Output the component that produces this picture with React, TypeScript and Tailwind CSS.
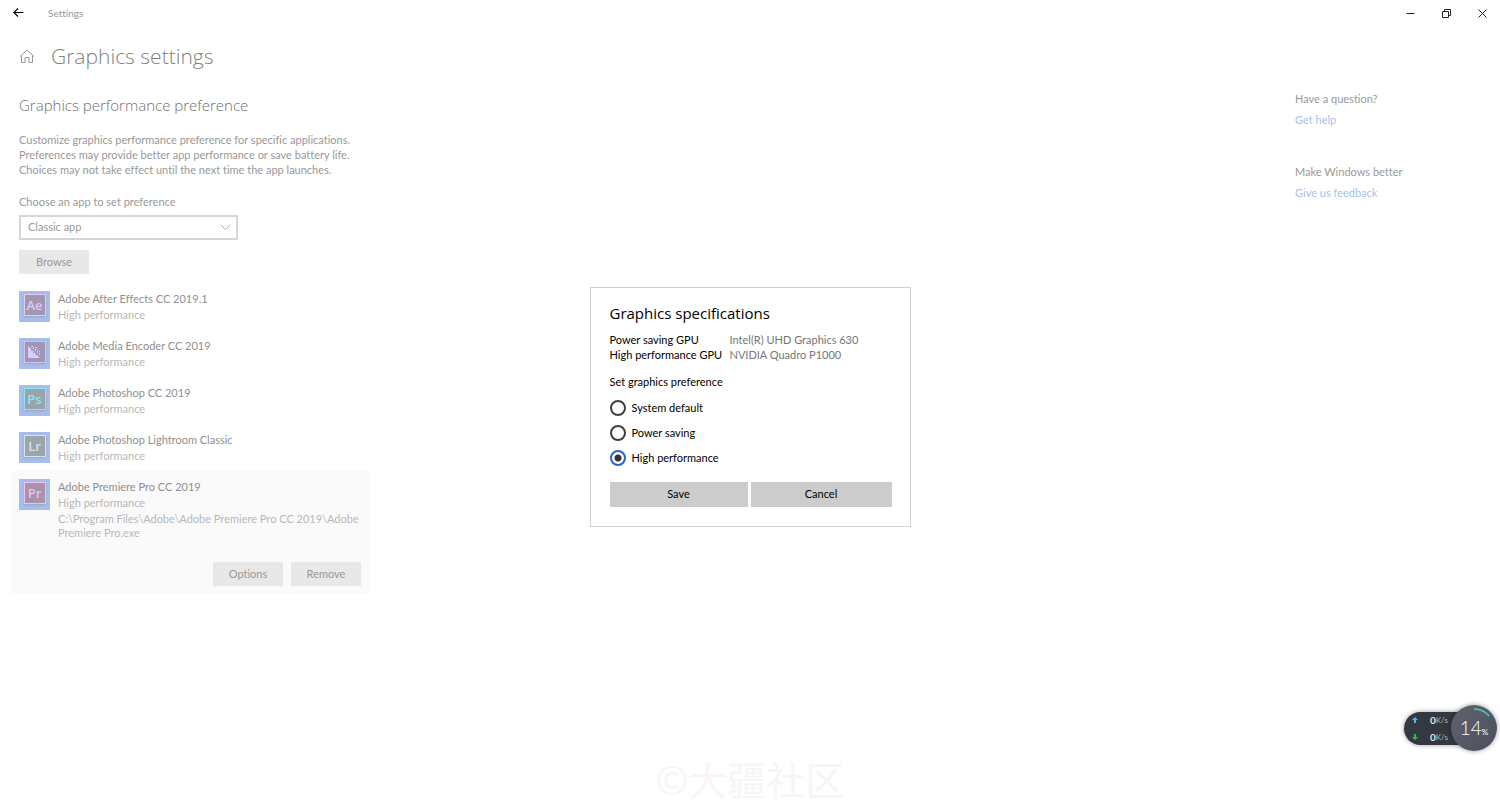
import { useState } from 'react';
import type { ReactNode } from 'react';

type AdobeApp = {
  name: string;
  icon: ReactNode;
  path?: string;
};

const PREFERENCES = ['System default', 'Power saving', 'High performance'];

const EncoderGlyph = () => (
  <svg width="13" height="12" viewBox="0 0 13 12" className="fill-[#d9cdf9]" aria-hidden="true">
    <path d="M0 0L12 12H0Z" />
    <path d="M3 0h2v1H3zM5 1h1v2H5zM7 1h2v1H7zM7 3h1v2H7zM9 3h1v1H9zM9 5h1v2H9zM11 5h1v1h-1zM11 7h1v2h-1z" />
    <path d="M3 4h1v1H3zM5 6h1v1H5zM7 8h1v1H7z" className="fill-[#a598bb]" />
  </svg>
);

const APPS: AdobeApp[] = [
  {
    name: 'Adobe After Effects CC 2019.1',
    icon: <Tile className="border-[#e3cbf6] bg-[#a297b3] text-[#dccbf6]">Ae</Tile>,
  },
  {
    name: 'Adobe Media Encoder CC 2019',
    icon: (
      <Tile className="border-[#cfc3f1] bg-[#9f95b4]">
        <EncoderGlyph />
      </Tile>
    ),
  },
  {
    name: 'Adobe Photoshop CC 2019',
    icon: <Tile className="border-[#8be5f9] bg-[#97a5ab] text-[#8be5f9]">Ps</Tile>,
  },
  {
    name: 'Adobe Photoshop Lightroom Classic',
    icon: <Tile className="border-[#d2e4ee] bg-[#9ba5aa] text-[#d2e4ee]">Lr</Tile>,
  },
  {
    name: 'Adobe Premiere Pro CC 2019',
    icon: <Tile className="border-[#f0bffb] bg-[#a794ab] text-[#eebcfb]">Pr</Tile>,
    path: 'C:\\Program Files\\Adobe\\Adobe Premiere Pro CC 2019\\Adobe Premiere Pro.exe',
  },
];

function Tile({ className, children }: { className: string; children?: ReactNode }) {
  return (
    <span className="flex size-[31px] shrink-0 items-center justify-center bg-[#a7beea] pb-[3px]">
      <span
        className={`flex size-[22px] items-center justify-center border font-['Open_Sans',sans-serif] text-[13px] leading-none font-semibold shadow-sm ${className}`}
      >
        {children}
      </span>
    </span>
  );
}

const GreyButton = ({ children }: { children: string }) => (
  <button type="button" className="h-6 w-[70px] bg-[#e8e8e8] text-[#999]">
    {children}
  </button>
);

const TitleBar = () => (
  <header className="flex h-[26px] items-center justify-between pl-[13px]">
    <div className="flex items-center gap-6">
      <button type="button" aria-label="Back" className="text-black">
        <svg width="11" height="10" viewBox="0 0 11 10" fill="none" stroke="currentColor">
          <path d="M0.8 4.5H10.5M5 0.5L0.8 4.5L5 8.5" strokeWidth="1.1" />
        </svg>
      </button>
      <span className="text-[10px]">Settings</span>
    </div>
    <div className="flex text-[#222]">
      <button type="button" aria-label="Minimize" className="flex w-9 justify-center">
        <svg width="9" height="9" viewBox="0 0 9 9" fill="none" stroke="currentColor">
          <path d="M0.5 4.5H8.5" />
        </svg>
      </button>
      <button type="button" aria-label="Restore" className="flex w-9 justify-center">
        <svg width="9" height="9" viewBox="0 0 9 9" fill="none" stroke="currentColor">
          <path d="M0.5 2.5H6.5V8.5H0.5ZM2.5 2.5V0.5H8.5V6.5H6.5" />
        </svg>
      </button>
      <button type="button" aria-label="Close" className="flex w-9 justify-center">
        <svg width="9" height="9" viewBox="0 0 9 9" fill="none" stroke="currentColor">
          <path d="M0.5 0.5L8.5 8.5M8.5 0.5L0.5 8.5" />
        </svg>
      </button>
    </div>
  </header>
);

const AppRow = ({ app }: { app: AdobeApp }) => (
  <li className={app.path ? 'bg-[#fafafa] p-2' : 'p-2'}>
    <div className="flex gap-2">
      {app.icon}
      <div className="-mb-px min-w-0 leading-4 text-[#b8b8b8]">
        <p className="text-[#8f8f8f]">{app.name}</p>
        <p>High performance</p>
        {app.path && <p className="pt-px leading-[14px]">{app.path}</p>}
      </div>
    </div>
    {app.path && (
      <div className="mt-[23px] flex justify-end gap-2">
        <GreyButton>Options</GreyButton>
        <GreyButton>Remove</GreyButton>
      </div>
    )}
  </li>
);

const SpecificationsDialog = () => {
  const [preference, setPreference] = useState('High performance');

  return (
    <div
      role="dialog"
      aria-labelledby="dialog-title"
      className="w-[321px] border border-[#d0d0d0] bg-white pt-[15px] pr-[18px] pb-[19px] pl-[19px] text-black"
    >
      <h2 id="dialog-title" className="font-['Open_Sans',sans-serif] text-[15px] leading-5">
        Graphics specifications
      </h2>
      <dl className="mt-[9px] grid grid-cols-[112px_1fr] gap-x-2 leading-[15px] whitespace-nowrap">
        <dt>Power saving GPU</dt>
        <dd className="text-[#767676]">Intel(R) UHD Graphics 630</dd>
        <dt>High performance GPU</dt>
        <dd className="text-[#767676]">NVIDIA Quadro P1000</dd>
      </dl>
      <fieldset className="mt-3">
        <legend className="mb-[7px] leading-[15px]">Set graphics preference</legend>
        {PREFERENCES.map((option) => (
          <label key={option} className="flex h-[25px] items-center gap-[6px]">
            <input
              type="radio"
              name="preference"
              className="size-4 appearance-none rounded-full border-2 border-[#404040] bg-white checked:border-[#2d61cf] checked:bg-[radial-gradient(circle,#333_3px,#fff_4px)]"
              checked={preference === option}
              onChange={() => {
                setPreference(option);
              }}
            />
            {option}
          </label>
        ))}
      </fieldset>
      <div className="mt-[11px] grid grid-cols-[138fr_141fr] gap-[3px]">
        <button type="button" className="h-[25px] bg-[#ccc]">
          Save
        </button>
        <button type="button" className="h-[25px] bg-[#ccc]">
          Cancel
        </button>
      </div>
    </div>
  );
};

const SpeedRow = ({ color, path }: { color: string; path: string }) => (
  <div className="flex items-center">
    <svg width="6" height="6" viewBox="0 0 6 6" fill={color} aria-hidden="true">
      <path d={path} />
    </svg>
    <span className="ml-3 text-[10px] leading-[17px] font-bold text-[#e4e5e8]">0</span>
    <span className="text-[8px] leading-[17px] text-[#b5b8bf]">K/s</span>
  </div>
);

const SpeedWidget = () => (
  <aside className="absolute right-[3px] bottom-[58px] flex items-center">
    <div className="-mr-6 h-[33px] w-[71px] rounded-l-full bg-[#343841] pl-2 shadow-[0_0_5px_#0006]">
      <SpeedRow color="#4fb4f0" path="M3 0L6 3H4V6H2V3H0Z" />
      <SpeedRow color="#39b54a" path="M3 6L6 3H4V0H2V3H0Z" />
    </div>
    <div className="relative flex size-[46px] items-center justify-center rounded-full bg-linear-to-br from-[#5f6470] to-[#4a4f5b] text-white shadow-[0_0_5px_#0006]">
      <svg className="absolute inset-0" viewBox="0 0 46 46" fill="none" aria-hidden="true">
        <path d="M23 4A19 19 0 0 1 38 11" stroke="#45d3bd" strokeWidth="1.6" />
      </svg>
      <span className="text-[19px] font-light">14</span>
      <span className="pt-2 text-[8px]">%</span>
    </div>
  </aside>
);

export default function App() {
  return (
    <div className="relative flex min-h-screen flex-col bg-white font-[Lato,'Open_Sans',sans-serif] text-[11px] text-[#999] [font-variant-ligatures:none]">
      <TitleBar />
      <div className="flex justify-between pl-[11px]">
        <main className="w-[358px]">
          <div className="flex items-center gap-4 pt-4 pl-2">
            <svg width="16" height="16" viewBox="0 0 16 16" fill="none" stroke="#999" aria-hidden="true">
              <path d="M1 8.5L8 2L15 8.5M2.5 7.5V14.5H6V9.5H10V14.5H13.5V7.5" />
            </svg>
            <h1 className="font-['Open_Sans',sans-serif] text-[21px] leading-7 font-light text-[#808080]">
              Graphics settings
            </h1>
          </div>
          <div className="px-2 pt-[25px]">
            <h2 className="font-['Open_Sans',sans-serif] text-[15px] leading-5 font-light text-[#707070]">
              Graphics performance preference
            </h2>
            <p className="mt-[17px] leading-[15px] whitespace-nowrap">
              Customize graphics performance preference for specific applications.
              <br />
              Preferences may provide better app performance or save battery life.
              <br />
              Choices may not take effect until the next time the app launches.
            </p>
            <label htmlFor="app-kind" className="mt-[17px] block leading-4">
              Choose an app to set preference
            </label>
            <div className="relative mt-[5px] w-[219px]">
              <select
                id="app-kind"
                className="block h-[25px] w-full appearance-none border-2 border-[#d6d6d6] bg-white px-[7px]"
              >
                <option>Classic app</option>
              </select>
              <svg
                className="pointer-events-none absolute top-[9px] right-[7px]"
                width="11"
                height="7"
                viewBox="0 0 11 7"
                fill="none"
                stroke="#b0b0b0"
                aria-hidden="true"
              >
                <path d="M0.8 0.8L5.5 5.5L10.2 0.8" />
              </svg>
            </div>
            <div className="mt-[10px] flex">
              <GreyButton>Browse</GreyButton>
            </div>
          </div>
          <ul className="mt-[9px]">
            {APPS.map((app) => (
              <AppRow key={app.name} app={app} />
            ))}
          </ul>
        </main>
        <aside className="w-[205px] pt-16 leading-[18px]">
          <p>Have a question?</p>
          <a href="#help" className="mt-[3px] block text-[#a6bfee]">
            Get help
          </a>
          <p className="mt-[34px]">Make Windows better</p>
          <a href="#feedback" className="mt-[3px] block text-[#a6bfee]">
            Give us feedback
          </a>
        </aside>
      </div>
      <p className="absolute inset-x-0 bottom-0 pb-0.5 text-center font-['Noto_Sans_CJK_SC',sans-serif] text-[39px] text-[#f9f5f5]">
        ©大疆社区
      </p>
      <div className="absolute inset-0 flex items-center justify-center pt-1">
        <SpecificationsDialog />
      </div>
      <SpeedWidget />
    </div>
  );
}
